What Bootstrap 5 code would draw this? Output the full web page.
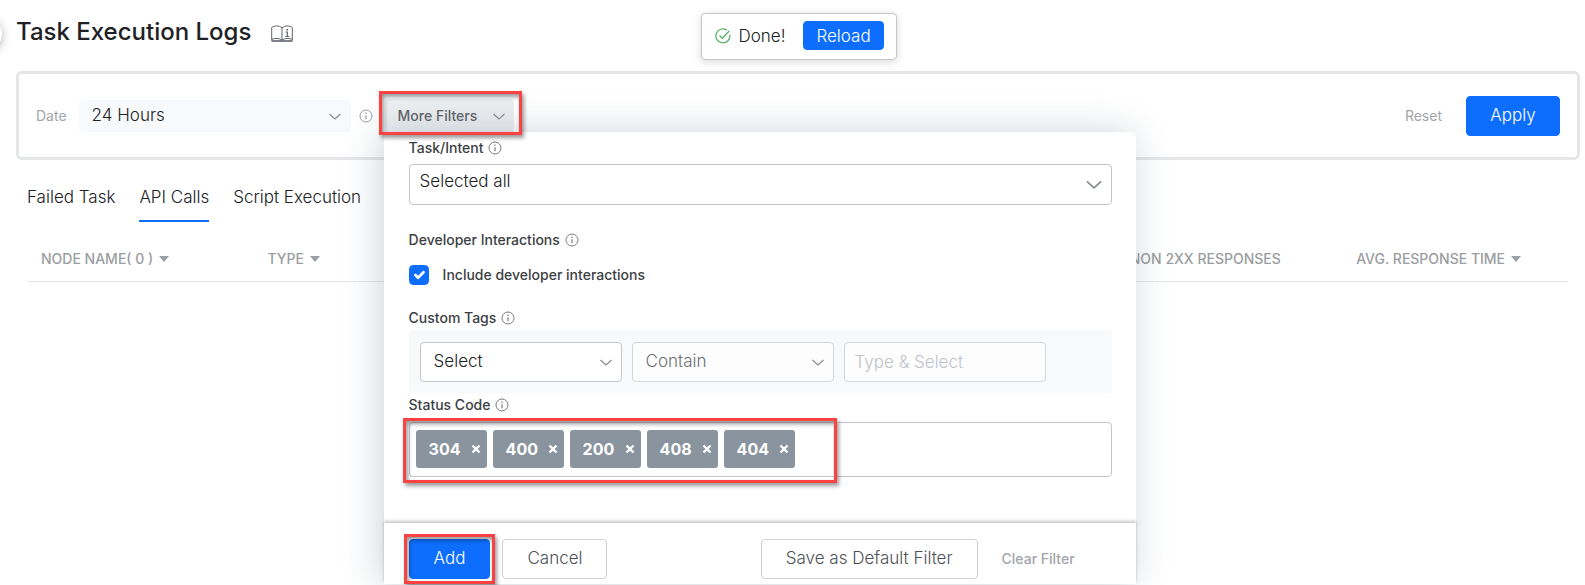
<!DOCTYPE html>
<html lang="en">
<head>
<meta charset="utf-8">
<meta name="viewport" content="width=device-width, initial-scale=1">
<title>Task Execution Logs</title>
<link href="https://cdn.jsdelivr.net/npm/bootstrap@5.3.0/dist/css/bootstrap.min.css" rel="stylesheet">
<style>
  :root { --bs-primary: #0d6efd; }
  body { font-family: Inter, "Liberation Sans", sans-serif; color: #202124; font-size: 17px; font-weight: 300; line-height: 24px; overflow: hidden; min-height: 100vh; }
  .page-head { height: 71px; padding: 0 0 8px 16px; }
  .page-title { font-size: 24px; line-height: 32px; font-weight: 500; }
  .book { margin-left: 20px; }
  .edge-knob { position: absolute; left: -32px; top: 17px; width: 34px; height: 34px; border-radius: 50%; background: #fff; box-shadow: 0 2px 10px rgba(0,0,0,.3); }
  .toast-done { position: absolute; top: 13px; left: 50%; margin-left: -92px; height: 47px; padding: 0 12px 2px 13px; border: 1px solid #c3c6ca; border-radius: 4px; background: #fff; box-shadow: 0 2px 8px rgba(0,0,0,.15); color: #202124; z-index: 30; }
  .toast-done .btn { height: 29px; padding: 0 12px; line-height: 24px; border-radius: 4px; margin-left: 18px; }
  .btn { font-size: 17px; font-weight: 300; border-radius: 4px; }
  .filter-bar { margin: 0 5px 0 16px; height: 89px; padding: 0 17px; border: 3px solid #e4e6e8; border-radius: 6px; }
  .soft { color: #a2a5aa; font-size: 14px; font-weight: 400; }
  .date-select { width: 272px; height: 32px; border: 0; border-radius: 4px; padding: 0 30px 0 13px; background-color: #f8f9fb; background-position: right 9px center; color: #3c4043; }
  .form-select, .form-control { font-size: 17px; font-weight: 300; color: #202124; }
  .form-select { background-size: 14px 14px; background-image: url("data:image/svg+xml,%3Csvg xmlns='http://www.w3.org/2000/svg' viewBox='0 0 14 14'%3E%3Cpath d='M1.5 5l5.500 5 5.500-5' fill='none' stroke='%23858a90' stroke-width='1.200'/%3E%3C/svg%3E"); }
  .more-wrap { margin-left: 12px; }
  .more-btn { height: 34px; width: 129px; padding: 0 8px 0 13px; border: 0; border-radius: 4px; background: #eceef0; color: #5f6368; font-size: 14px; font-weight: 500; }
  .apply-btn { width: 94px; height: 40px; padding: 0; }
  .marked { position: relative; }
  .marked::after { content: ""; position: absolute; inset: -5px; border: 3px solid #fb4242; box-shadow: 2px 3px 4px rgba(0,0,0,.4), inset 2px 3px 4px rgba(0,0,0,.4); pointer-events: none; z-index: 25; }
  .mark-more::after { inset: -8px -8px -2px -6px; }
  .filter-panel { position: absolute; top: 33px; left: -1px; width: 752px; padding: 4px 24px 0 25px; background: #fff; border-radius: 0 6px 0 0; box-shadow: -4px 0 36px rgba(100,120,140,.32); z-index: 20; }
  .field-label { display: flex; align-items: center; gap: 5px; height: 24px; font-size: 14px; font-weight: 500; color: #3c4043; }
  .field-box { border: 1px solid #c3c6ca; border-radius: 4px; }
  .intent-select { height: 41px; padding: 0 40px 4px 10px; margin: 4px 0 23px; background-size: 18px 18px; background-position: right 8px center; }
  .check-row { gap: 14px; margin: 11px 0 19px; }
  .dev-check { width: 20px; height: 20px; margin: 0; border-radius: 4px; }
  .tag-row { height: 63px; gap: 10px; padding: 12px 11px; background: #f8f9fb; border-radius: 4px; }
  .tag-row .field-box { width: 202px; height: 40px; }
  .tag-row .form-select { padding: 0 30px 0 13px; background-position: right 8px center; }
  .tag-row .form-select:disabled { color: #6c7075; background-color: #fdfdfd; border-color: #d3d6da; }
  .tag-row .form-control { padding: 0 10px; background: #fdfdfd; border-color: #d3d6da; }
  .tag-row .form-control::placeholder { color: #bfc3ca; }
  .code-box { height: 55px; margin-top: 5px; padding: 0 6px; }
  .code-list { gap: 6px; }
  .mark-codes::after { inset: -12px -42px -15px -13px; }
  .code-chip { width: 71px; height: 38px; padding: 0 6px 0 13px; border-radius: 3px; background: #8a949e; color: #fff; font-size: 16px; font-weight: 700; }
  .code-chip button { border: 0; background: none; color: #fff; padding: 0; width: 10px; line-height: 0; }
  .code-input { border: 0; min-width: 0; outline: 0; background: none; margin-left: 48px; }
  .panel-foot { gap: 12px; margin: 46px -24px 0 -25px; padding: 16px 24px 5px 25px; background: #fff; box-shadow: 0 -2px 3px rgba(0,0,0,.22); }
  .panel-foot .btn { height: 40px; padding: 0 24px; }
  .panel-foot .soft, .filter-bar .reset-btn { height: 40px; padding: 0; border: 0; background: none; }
  .clear-btn { margin: 0 37px 0 12px; }
  .line-btn { border: 1px solid #cdd0d4; color: #4d5156; background: #fff; }
  .tab-row { margin: 20px 0 0 27px; gap: 24px; }
  .tab-row a { color: #202124; text-decoration: none; height: 42px; padding-top: 5px; border-bottom: 2px solid transparent; }
  .tab-row a.active { border-color: #0d6efd; }
  .log-wrap { margin: 15px 17px 0 28px; }
  .log-table { table-layout: fixed; margin: 0; width: 100%; }
  .log-table th { height: 44px; padding: 0 0 0 13px; vertical-align: middle; font-size: 14px; font-weight: 500; color: #9a9da1; border-bottom: 1px solid #e2e4e6; white-space: nowrap; background: none; }
  .caret { display: inline-block; border: 5px solid transparent; border-top: 6px solid #9aa0a6; border-bottom: 0; vertical-align: 2px; margin-left: 2px; }
</style>
</head>
<body>
<svg class="d-none">
  <symbol id="info" viewBox="0 0 14 14"><circle cx="7" cy="7" r="6" fill="none" stroke="currentColor"/><path d="M7 6.200V10.200M7 3.600V4.900" stroke="currentColor" stroke-width="1.200"/></symbol>
  <symbol id="cross" viewBox="0 0 10 10"><path d="M1.500 1.500l7 7M8.500 1.500l-7 7" stroke="currentColor" stroke-width="2.400"/></symbol>
</svg>

<header class="page-head d-flex align-items-center">
  <span class="edge-knob"></span>
  <h1 class="page-title m-0">Task Execution Logs</h1>
  <svg width="22" height="17" viewBox="0 0 22 17" fill="none" stroke="#5f6368" class="book mt-1" aria-hidden="true">
    <path d="M.7 15.500V2.500C3.500.5 8 .3 11 2.800C14 .3 18.500.5 21.300 2.500V15.500M11 2.800V15.500M1 14.300C4 13 8 13 11 15C14 13 18 13 21 14.300"/>
    <path d="M.5 16H21.500" stroke-width="1.600"/><path d="M14.700 7H16.300V11.500M14.300 11.500H18.300" stroke-width="1.200"/><path d="M15.300 4.700H17" stroke-width="1.600"/>
  </svg>
  <div class="toast-done d-flex align-items-center" role="status">
    <svg width="16" height="16" viewBox="0 0 16 16" fill="none" stroke="#58b368" stroke-width="1.300" class="me-2" aria-hidden="true"><path d="M14.800 6.800A7 7 0 1 1 11.800 2.100"/><path d="M4.500 7.500L7.300 10.300L14.300 3"/></svg>
    <span>Done!</span>
    <button type="button" class="btn btn-primary">Reload</button>
  </div>
</header>

<main>
  <section class="filter-bar d-flex align-items-center">
    <label for="date" class="soft me-2 pe-1">Date</label>
    <select id="date" class="form-select date-select"><option>24 Hours</option></select>
    <svg width="14" height="14" color="#9a9da1" class="ms-2 flex-shrink-0"><use href="#info"/></svg>
    <div class="marked mark-more more-wrap">
      <button type="button" class="more-btn d-flex align-items-center justify-content-between" aria-expanded="true">More Filters
        <svg width="14" height="14" viewBox="0 0 14 14" fill="none" stroke="#8a8e93" stroke-width="1.200"><path d="M1.500 5l5.500 5 5.500-5"/></svg>
      </button>
      <form class="filter-panel">
        <label for="intent" class="field-label">Task/Intent <svg width="14" height="14" color="#777b80"><use href="#info"/></svg></label>
        <select id="intent" class="form-select field-box intent-select"><option>Selected all</option></select>

        <div class="field-label">Developer Interactions <svg width="14" height="14" color="#777b80"><use href="#info"/></svg></div>
        <div class="check-row d-flex align-items-center">
          <input type="checkbox" id="dev" class="form-check-input dev-check" checked>
          <label for="dev" class="field-label">Include developer interactions</label>
        </div>

        <label for="tag" class="field-label">Custom Tags <svg width="14" height="14" color="#777b80"><use href="#info"/></svg></label>
        <div class="tag-row d-flex">
          <select id="tag" class="form-select field-box"><option>Select</option></select>
          <select class="form-select field-box" disabled aria-label="Condition"><option>Contain</option></select>
          <input type="text" class="form-control field-box" placeholder="Type &amp; Select" aria-label="Value" disabled>
        </div>

        <label for="code" class="field-label">Status Code <svg width="14" height="14" color="#777b80"><use href="#info"/></svg></label>
        <div class="code-box field-box d-flex align-items-center">
          <div class="marked mark-codes code-list d-flex">
            <span class="code-chip d-flex align-items-center justify-content-between">304<button type="button" aria-label="Remove"><svg width="10" height="10"><use href="#cross"/></svg></button></span>
            <span class="code-chip d-flex align-items-center justify-content-between">400<button type="button" aria-label="Remove"><svg width="10" height="10"><use href="#cross"/></svg></button></span>
            <span class="code-chip d-flex align-items-center justify-content-between">200<button type="button" aria-label="Remove"><svg width="10" height="10"><use href="#cross"/></svg></button></span>
            <span class="code-chip d-flex align-items-center justify-content-between">408<button type="button" aria-label="Remove"><svg width="10" height="10"><use href="#cross"/></svg></button></span>
            <span class="code-chip d-flex align-items-center justify-content-between">404<button type="button" aria-label="Remove"><svg width="10" height="10"><use href="#cross"/></svg></button></span>
          </div>
          <input type="text" id="code" class="code-input flex-fill">
        </div>

        <div class="panel-foot d-flex align-items-center">
          <span class="marked"><button type="submit" class="btn btn-primary">Add</button></span>
          <button type="button" class="btn line-btn">Cancel</button>
          <button type="button" class="btn line-btn ms-auto">Save as Default Filter</button>
          <button type="button" class="clear-btn soft fw-medium">Clear Filter</button>
        </div>
      </form>
    </div>
    <button type="button" class="reset-btn soft ms-auto">Reset</button>
    <button type="button" class="btn btn-primary apply-btn ms-4">Apply</button>
  </section>

  <nav class="tab-row d-flex">
    <a href="#failed">Failed Task</a>
    <a href="#api" class="active" aria-current="page">API Calls</a>
    <a href="#script">Script Execution</a>
  </nav>

  <div class="log-wrap">
    <table class="log-table">
      <colgroup><col style="width:14.7%"><col style="width:56%"><col style="width:14.7%"><col style="width:14.6%"></colgroup>
      <thead><tr>
        <th scope="col">NODE NAME( 0 ) <span class="caret"></span></th>
        <th scope="col">TYPE <span class="caret"></span></th>
        <th scope="col">NON 2XX RESPONSES</th>
        <th scope="col">AVG. RESPONSE TIME <span class="caret"></span></th>
      </tr></thead>
    </table>
  </div>
</main>
<script src="https://cdn.jsdelivr.net/npm/bootstrap@5.3.0/dist/js/bootstrap.bundle.min.js"></script>
</body>
</html>
